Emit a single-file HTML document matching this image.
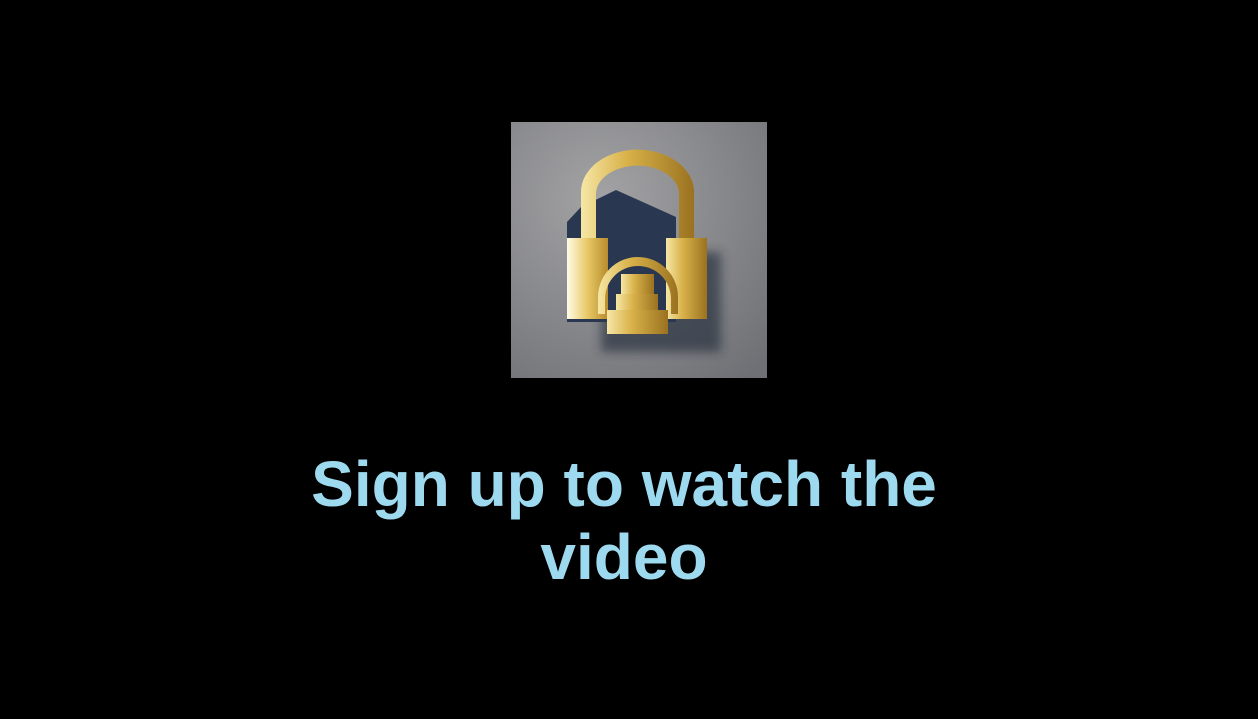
<!DOCTYPE html>
<html><head><style>
html,body{margin:0;padding:0;background:#000;width:1258px;height:719px;overflow:hidden}
.img{position:absolute;left:511px;top:122px;width:256px;height:256px}
.t{position:absolute;left:-5px;width:1258px;top:448px;text-align:center;font-family:"Liberation Sans",sans-serif;font-weight:bold;font-size:64px;line-height:73px;color:#9dd9ef}
</style></head><body>
<svg class="img" viewBox="0 0 256 256" width="256" height="256">
<defs>
<radialGradient id="bg" cx="0.35" cy="0.3" r="0.9"><stop offset="0" stop-color="#a3a3a5"/><stop offset="1" stop-color="#6f7075"/></radialGradient>
<linearGradient id="g" x1="0" x2="1"><stop offset="0" stop-color="#f6e7a6"/><stop offset="0.4" stop-color="#d9b24a"/><stop offset="1" stop-color="#9a7220"/></linearGradient>
<linearGradient id="g2" x1="0" x2="1"><stop offset="0" stop-color="#fffbe8"/><stop offset="0.5" stop-color="#e8c865"/><stop offset="1" stop-color="#b88c2c"/></linearGradient>
<filter id="b"><feGaussianBlur stdDeviation="5"/></filter>
</defs>
<rect width="256" height="256" fill="url(#bg)"/>
<rect x="90" y="130" width="120" height="100" fill="#1c2535" opacity="0.6" filter="url(#b)"/>
<path d="M56 100 L56 200 L165 200 L165 95 L105 68 L70 85 Z" fill="#2a3750"/>
<path d="M70 117 L70 70 A56 42 0 0 1 183 70 L183 117 L168 117 L168 72 A41 28 0 0 0 85 72 L85 117 Z" fill="url(#g)"/>
<rect x="56" y="116" width="41" height="81" fill="url(#g2)"/>
<rect x="155" y="116" width="41" height="81" fill="url(#g)"/>
<path d="M87 192 L87 175 A40 40 0 0 1 167 175 L167 192 L160 192 L160 177 A33 33 0 0 0 94 177 L94 192 Z" fill="url(#g)"/>
<rect x="110" y="152" width="33" height="22" fill="url(#g)"/>
<rect x="105" y="172" width="42" height="18" fill="url(#g)"/>
<rect x="96" y="188" width="61" height="24" fill="url(#g)"/>
</svg>
<div class="t">Sign up to watch the<br>video</div>
</body></html>
